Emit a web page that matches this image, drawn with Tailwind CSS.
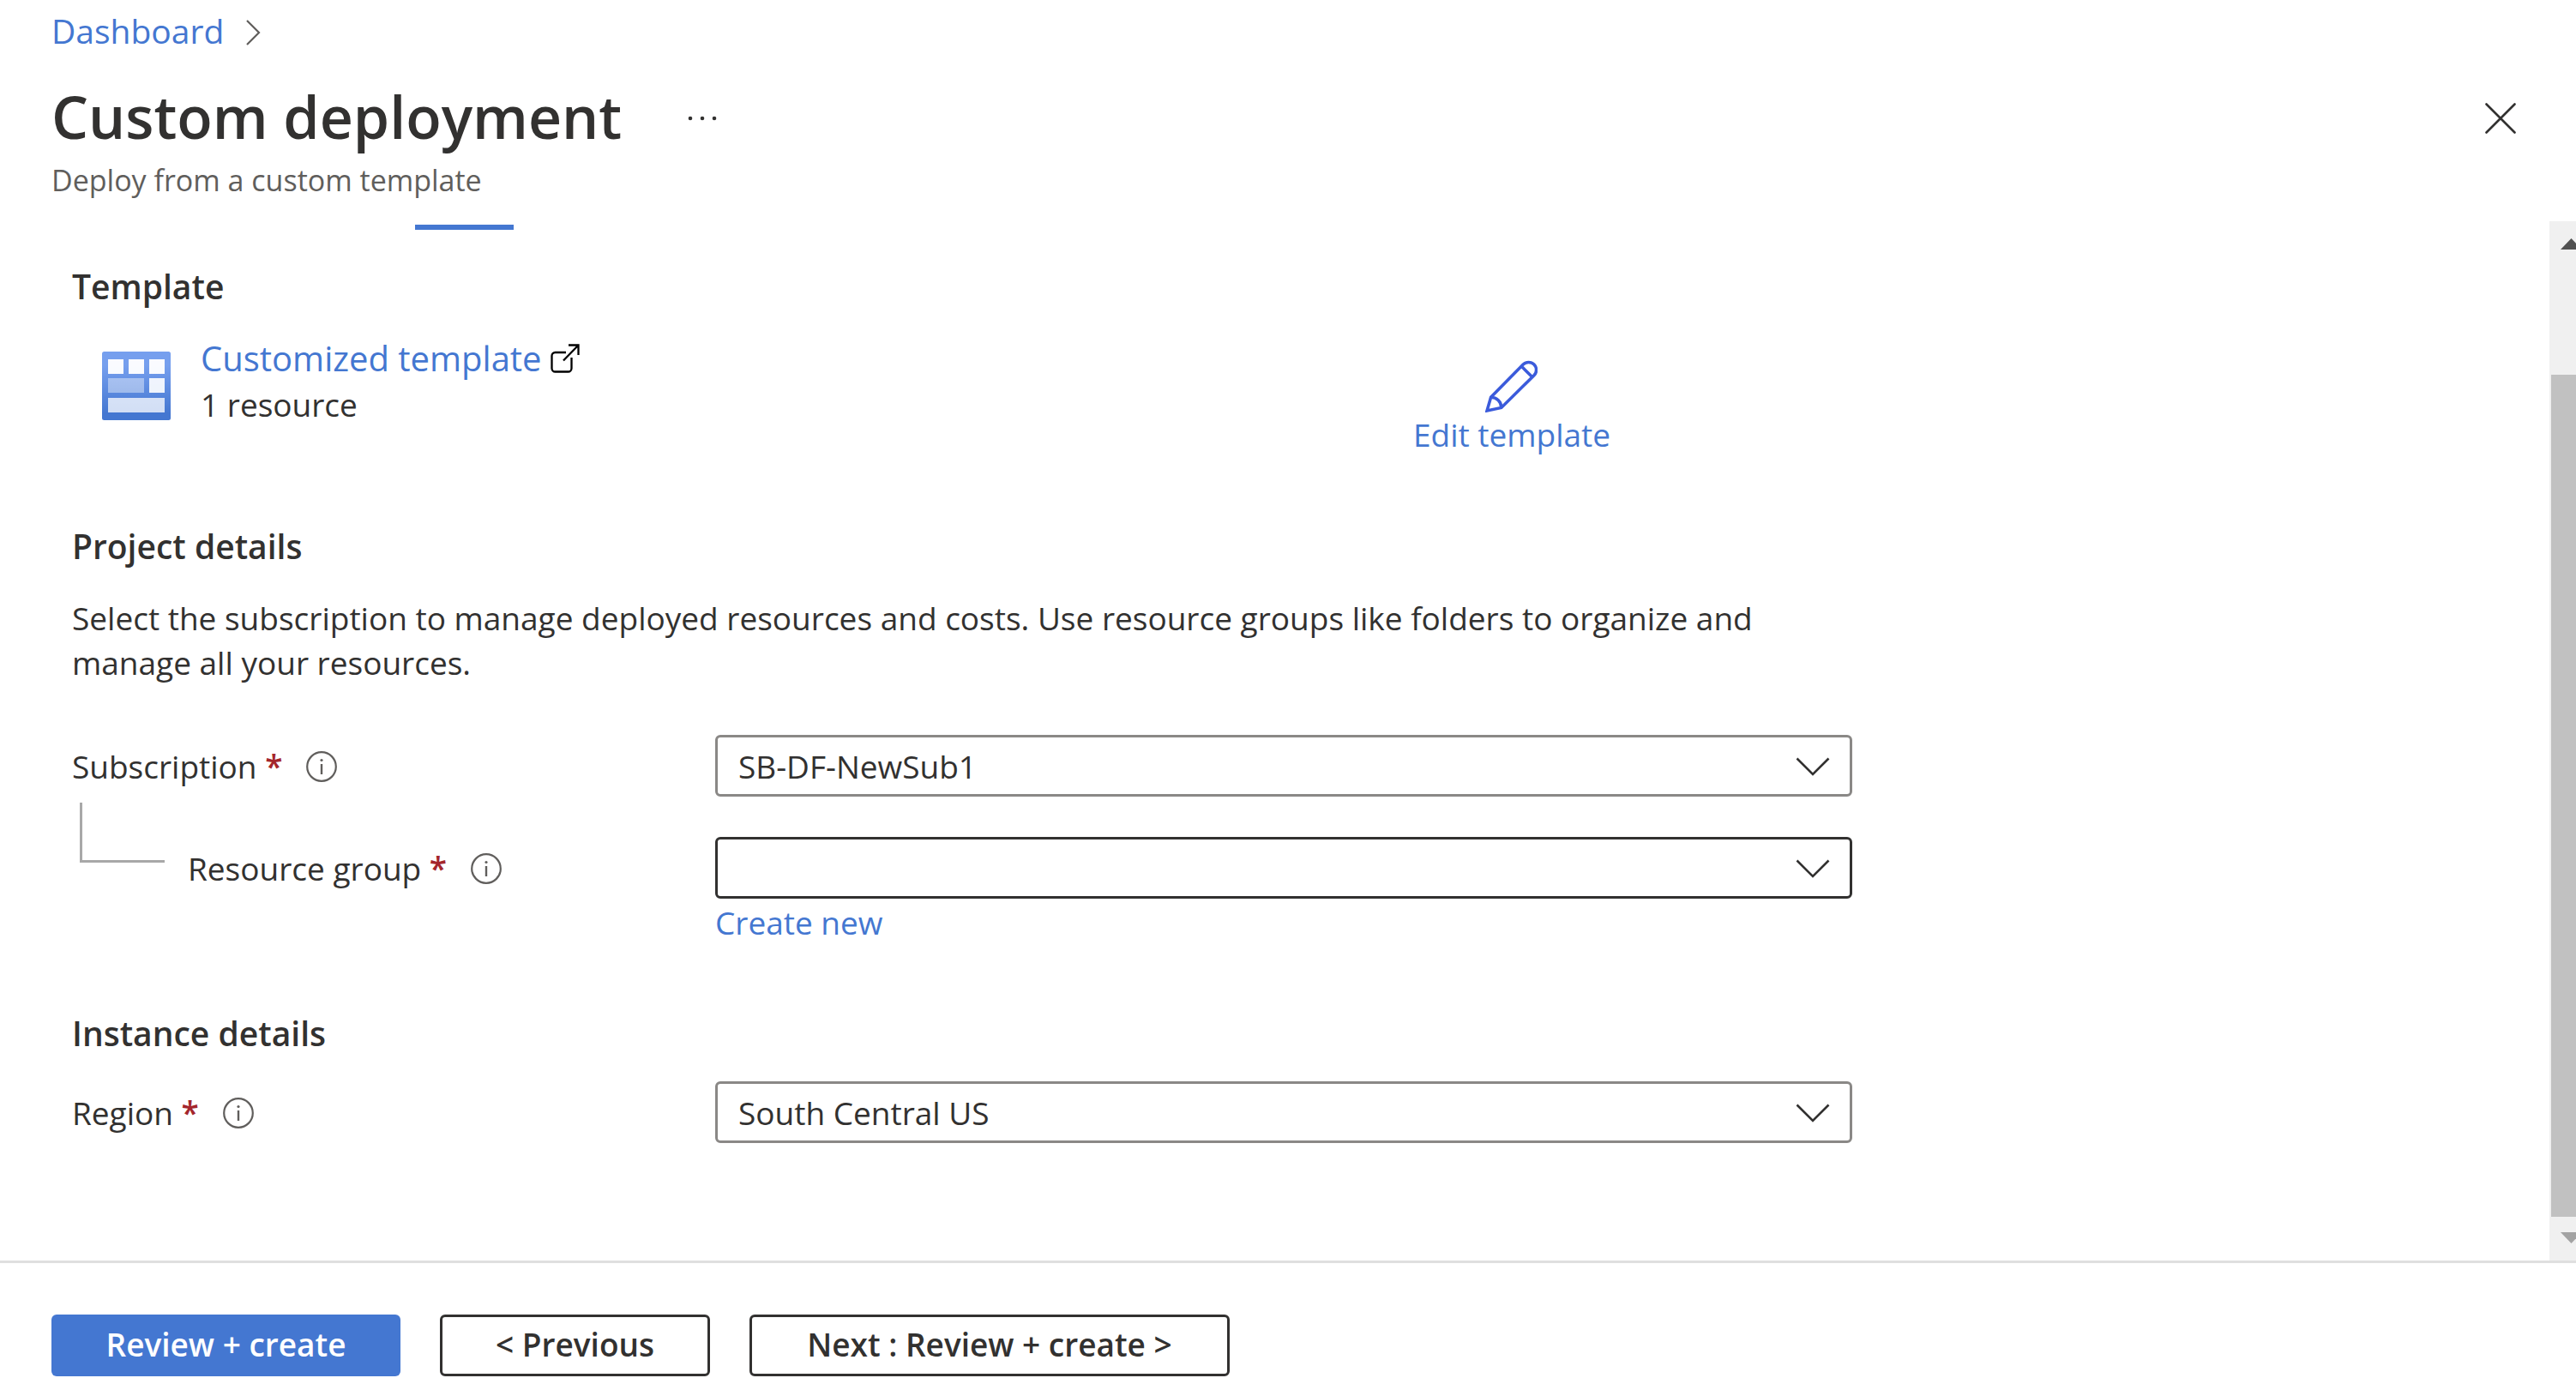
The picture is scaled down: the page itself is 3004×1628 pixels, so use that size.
<!DOCTYPE html>
<html lang="en">
<head>
<meta charset="utf-8">
<title>Custom deployment</title>
<script src="https://cdn.jsdelivr.net/npm/@tailwindcss/browser@4"></script>
</head>
<body class="flex h-screen flex-col overflow-hidden bg-white font-['Open_Sans','Noto_Sans',sans-serif] text-[37px] leading-[52px] text-[#323130]">
<svg class="hidden" aria-hidden="true">
  <symbol id="info" viewBox="0 0 36 36"><circle cx="18" cy="18" r="16.8" fill="none" stroke="#605e5c" stroke-width="2.2"/><circle cx="18" cy="10.5" r="1.6" fill="#605e5c"/><path d="M18 15v12" stroke="#605e5c" stroke-width="2.4"/></symbol>
  <symbol id="chevron" viewBox="0 0 40 22"><path d="M1.5 1.5 20 20 38.500 1.500" fill="none" stroke="#323130" stroke-width="2.6"/></symbol>
</svg>

<header class="flex h-[258px] shrink-0 flex-col pl-[60px] pr-[70px]">
  <nav aria-label="Breadcrumb" class="flex h-[72px] items-center gap-[25px] text-[39px]">
    <a href="#" class="text-[#4477d1]">Dashboard</a>
    <svg class="mt-1 h-[30px] w-[18px]" viewBox="0 0 18 30" fill="none" stroke="#605e5c" stroke-width="2.2"><path d="M2 1l14 14L2 29"/></svg>
  </nav>
  <div class="mt-6 flex h-20 items-center">
    <h1 class="text-[68px] font-semibold leading-[80px]">Custom deployment</h1>
    <button type="button" aria-label="More" class="ml-[76px] mt-1 flex h-10 w-10 items-center">
      <svg class="h-2 w-9" viewBox="0 0 36 8" fill="#323130"><circle cx="4" cy="4" r="2.300"/><circle cx="18" cy="4" r="2.300"/><circle cx="32" cy="4" r="2.300"/></svg>
    </button>
    <button type="button" aria-label="Close" class="ml-auto mt-1 flex">
      <svg class="size-9" viewBox="0 0 36 36" stroke="#323130" stroke-width="2.6" stroke-linecap="round"><path d="M1.500 1.500l33 33M34.500 1.500l-33 33"/></svg>
    </button>
  </div>
  <p class="mt-2.5 text-[34px] leading-[48px] text-[#605e5c]">Deploy from a custom template</p>
</header>

<div class="flex min-h-0 flex-1">
  <main class="min-w-0 flex-1 pl-[84px] pr-10">
    <div class="ml-[400px] mt-1 h-1.5 w-[115px] bg-[#4477d1]"></div>

    <div class="w-full max-w-[2076px]">
      <h2 class="mt-[38px] text-[39px] font-semibold leading-[56px]">Template</h2>
      <div class="mt-[28px] flex h-[143px] items-start">
        <svg class="ml-[35px] mt-5 size-20" viewBox="0 0 80 80">
          <defs><linearGradient id="tile" x1="0" y1="0" x2="0" y2="1"><stop offset="0.2" stop-color="#769fee"/><stop offset="0.9" stop-color="#4477d1"/></linearGradient></defs>
          <rect width="80" height="80" rx="2.500" fill="url(#tile)"/>
          <g fill="#fff">
            <path fill-opacity=".96" d="M7 9h18v17H7zM31 9h18v17H31zM55 9h18v17H55z"/>
            <path fill-opacity=".42" d="M7 31h42v17H7z"/>
            <path fill-opacity=".9" d="M55 31h18v17H55z"/>
            <path fill-opacity=".76" d="M7 54h66v17H7z"/>
          </g>
        </svg>
        <div class="ml-[35px]">
          <a href="#" class="flex h-[56px] items-center gap-2.5 text-[40px] text-[#4477d1]">Customized template
            <svg class="size-[34px]" viewBox="0 0 34 34" fill="none" stroke="#000" stroke-width="2.300"><path d="M18 10H5.500A4 4 0 0 0 1.500 14V28.500A4 4 0 0 0 5.500 32.500H20.500A4 4 0 0 0 24.500 28.500V16M21 1.500H32.500V13M32.500 1.500L15 19.500"/></svg>
          </a>
          <p>1 resource</p>
        </div>
        <a href="#" class="ml-auto mr-[282px] mt-[30px] flex flex-col items-center text-[#4477d1]">
          <svg class="h-[61px] w-[61px]" viewBox="0 0 60 60" fill="none" stroke="#3b5bdb" stroke-width="3.500" stroke-linejoin="miter"><path d="M2 58L6.500 42.500 43.500 5A8.800 8.800 0 0 1 56 17.500L18.500 54.500ZM41.500 7L54 19.500M6.500 42.500A12 12 0 0 1 18.500 54.500"/></svg>
          <span>Edit template</span>
        </a>
      </div>

      <h2 class="mt-[76px] text-[39px] font-semibold leading-[56px]">Project details</h2>
      <p class="mt-[30px]">Select the subscription to manage deployed resources and costs. Use resource groups like folders to organize and manage all your resources.</p>

      <div class="mt-[58px] grid grid-cols-[750px_minmax(0,1fr)] items-center">
        <div class="relative flex items-center pt-0.5">
          <label for="subscription">Subscription <span class="font-semibold text-[#a4262c]">*</span></label>
          <svg class="ml-7 size-9"><use href="#info"/></svg>
          <div class="absolute left-[9px] top-[70px] h-[70px] w-[99px] border-b-3 border-l-3 border-[#a8a8a8]"></div>
        </div>
        <div class="relative">
          <select id="subscription" class="block h-[72px] w-full appearance-none rounded-[6px] border-3 border-[#8a8886] bg-white pl-6 pt-0.5"><option>SB-DF-NewSub1</option></select>
          <svg class="pointer-events-none absolute right-[26px] top-[26px] h-[22px] w-10"><use href="#chevron"/></svg>
        </div>
      </div>

      <div class="mt-[47px] grid grid-cols-[750px_minmax(0,1fr)] items-center">
        <div class="flex items-center pl-[135px] pt-0.5">
          <label for="group">Resource group <span class="font-semibold text-[#a4262c]">*</span></label>
          <svg class="ml-7 size-9"><use href="#info"/></svg>
        </div>
        <div class="relative">
          <select id="group" class="block h-[72px] w-full appearance-none rounded-[6px] border-3 border-[#323130] bg-white pl-6 pt-0.5"><option></option></select>
          <svg class="pointer-events-none absolute right-[26px] top-[26px] h-[22px] w-10"><use href="#chevron"/></svg>
        </div>
      </div>
      <div class="flex pl-[750px] pt-0.5"><a href="#" class="text-[#4477d1]">Create new</a></div>

      <h2 class="mt-[75px] text-[39px] font-semibold leading-[56px]">Instance details</h2>
      <div class="mt-[28px] grid grid-cols-[750px_minmax(0,1fr)] items-center">
        <div class="flex items-center pt-0.5">
          <label for="region">Region <span class="font-semibold text-[#a4262c]">*</span></label>
          <svg class="ml-7 size-9"><use href="#info"/></svg>
        </div>
        <div class="relative">
          <select id="region" class="block h-[72px] w-full appearance-none rounded-[6px] border-3 border-[#8a8886] bg-white pl-6 pt-0.5"><option>South Central US</option></select>
          <svg class="pointer-events-none absolute right-[26px] top-[26px] h-[22px] w-10"><use href="#chevron"/></svg>
        </div>
      </div>
    </div>
  </main>

  <div class="flex w-[31px] shrink-0 flex-col overflow-hidden bg-[#f0f0f0] pl-0.5" aria-hidden="true">
    <svg class="mb-[146px] ml-[11px] mt-5 h-[13px] w-[25px] shrink-0" viewBox="0 0 25 13"><path d="M0 13L12.500 0 25 13z" fill="#505050"/></svg>
    <div class="flex-1 bg-[#c1c1c1]"></div>
    <svg class="mb-5 ml-[11px] mt-[18px] h-[13px] w-[25px] shrink-0" viewBox="0 0 25 13"><path d="M0 0h25L12.500 13z" fill="#a3a3a3"/></svg>
  </div>
</div>

<footer class="flex h-[158px] shrink-0 gap-[46px] border-t-3 border-[#dfdfdf] pl-[60px] pt-[60px] font-semibold">
  <button type="button" class="h-[72px] w-[407px] rounded-[6px] bg-[#4477d1] pb-0.5 text-white">Review + create</button>
  <button type="button" class="h-[72px] w-[315px] rounded-[6px] border-3 border-[#323130] pb-0.5">&lt; Previous</button>
  <button type="button" class="h-[72px] w-[560px] rounded-[6px] border-3 border-[#323130] pb-0.5">Next : Review + create &gt;</button>
</footer>
</body>
</html>
